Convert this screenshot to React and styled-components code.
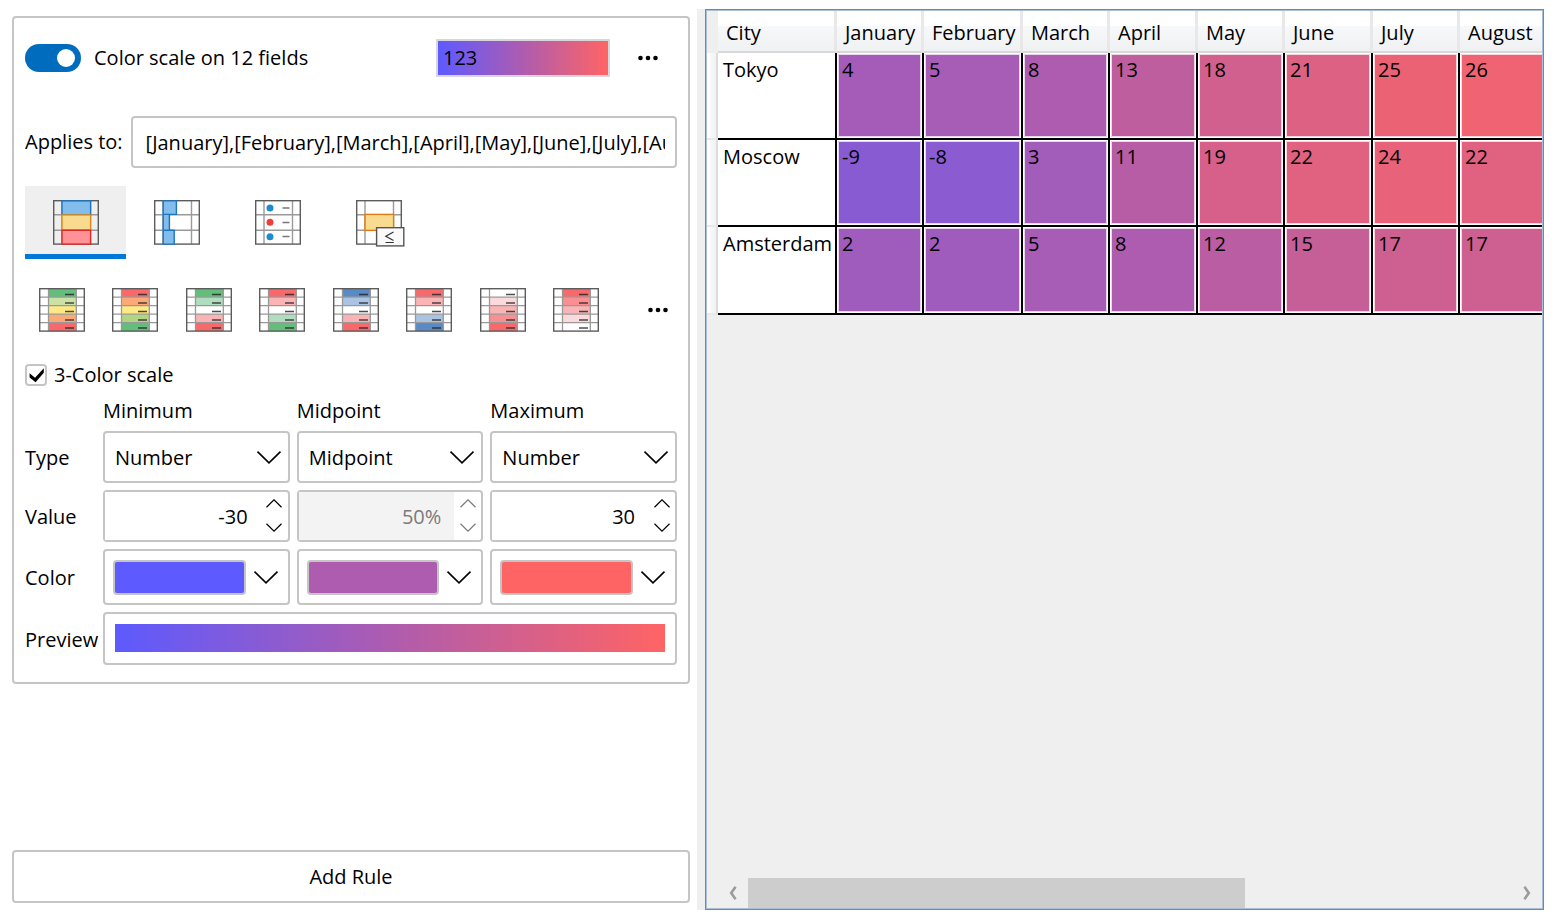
import React, { useState } from 'react'
import styled, { createGlobalStyle, css } from 'styled-components'

const MIN = [93, 90, 255]
const MID = [174, 92, 175]
const MAX = [255, 100, 100]

const rgb = c => `rgb(${c.join(', ')})`
const mix = (a, b, t) => a.map((v, i) => Math.round(v + (b[i] - v) * t))

const LOW = -30
const CENTER = 8.5
const HIGH = 30

const scaleColor = value =>
  rgb(
    value < CENTER
      ? mix(MIN, MID, (value - LOW) / (CENTER - LOW))
      : mix(MID, MAX, (value - CENTER) / (HIGH - CENTER))
  )

const gradient = `linear-gradient(to right, ${rgb(MIN)}, ${rgb(MID)}, ${rgb(MAX)})`

const GlobalStyle = createGlobalStyle`
  * {
    box-sizing: border-box;
  }
  body {
    margin: 0;
    background: #fff;
    color: #000;
    font-family: "Open Sans", "Noto Sans", sans-serif;
    font-size: 20px;
    line-height: 26px;
  }
  button, input, select {
    margin: 0;
    font: inherit;
    color: inherit;
  }
`

const Page = styled.div`
  display: grid;
  grid-template-columns: minmax(0, 685fr) 8px minmax(0, 839fr);
  min-height: 100vh;
  padding: 9px 12px 8px;
`

const RulesPane = styled.section`
  display: flex;
  flex-direction: column;
  justify-content: space-between;
  padding: 7px 0;
  margin-right: 7px;
`

const Splitter = styled.div`
  background: #efefef;
`

const boxed = css`
  background: #fff;
  border: 2px solid #c5c5c5;
  border-radius: 4px;
`

const Card = styled.div`
  ${boxed}
  padding: 21px 11px 17px;
`

const CardHeader = styled.div`
  display: flex;
  align-items: center;
  height: 38px;
`

const Switch = styled.input`
  appearance: none;
  display: flex;
  align-items: center;
  justify-content: flex-end;
  width: 56px;
  height: 28px;
  padding: 0 6px;
  border-radius: 14px;
  background: #006cbe;

  &::before {
    content: '';
    width: 18px;
    height: 18px;
    border-radius: 50%;
    background: #fff;
  }

  &:not(:checked) {
    justify-content: flex-start;
    background: #8a8a8a;
  }
`

const SwitchLabel = styled.label`
  margin-left: 13px;
`

const Sample = styled.div`
  width: 174px;
  height: 38px;
  margin-left: auto;
  padding: 4px 5px;
  border: 2px solid #d9d5dd;
  background: ${gradient} padding-box;
`

const PlainButton = styled.button`
  display: flex;
  align-items: center;
  justify-content: center;
  padding: 0;
  border: 0;
  background: none;
`

const MoreButton = styled(PlainButton)`
  width: 36px;
  height: 36px;
  margin-left: ${props => (props.$push ? 'auto' : '20px')};
  margin-right: ${props => (props.$push ? '1px' : '11px')};
`

const AppliesRow = styled.div`
  display: flex;
  align-items: center;
  gap: 8px;
  margin-top: 39px;
`

const AppliesInput = styled.input`
  ${boxed}
  flex: 1;
  min-width: 0;
  height: 52px;
  padding: 0 10px 0 13px;
`

const TabList = styled.div`
  display: flex;
  margin-top: 18px;
`

const Tab = styled(PlainButton)`
  align-items: flex-start;
  width: 101px;
  height: 73px;
  padding-top: 14px;
  border-bottom: 5px solid ${props => (props.$active ? '#0078d7' : 'transparent')};
  background: ${props => (props.$active ? '#efefef' : 'none')};
`

const PresetList = styled.div`
  display: grid;
  grid-template-columns: repeat(8, 1fr) 64px;
  align-items: center;
  height: 44px;
  margin-top: 29px;
`

const CheckRow = styled.div`
  display: flex;
  align-items: center;
  gap: 7px;
  height: 22px;
  margin-top: 32px;
`

const CheckWrap = styled.span`
  position: relative;
  display: flex;

  svg {
    position: absolute;
    inset: 0;
    pointer-events: none;
  }
`

const CheckBox = styled.input`
  ${boxed}
  appearance: none;
  width: 22px;
  height: 22px;
`

const Form = styled.div`
  display: grid;
  grid-template-columns: 71px repeat(3, minmax(0, 1fr));
  gap: 7px;
  align-items: center;
  margin-top: 12px;
`

const ColumnLabel = styled.span`
  white-space: nowrap;
`

const RowLabel = styled(ColumnLabel)`
  padding-top: 2px;
`

const SelectBox = styled.div`
  display: grid;
  align-items: center;

  > * {
    grid-area: 1 / 1;
  }

  svg {
    justify-self: end;
    margin-right: 8px;
    pointer-events: none;
  }
`

const Select = styled.select`
  ${boxed}
  appearance: none;
  width: 100%;
  height: 52px;
  padding: 2px 40px 0 10px;
`

const NumberBox = styled.div`
  ${boxed}
  display: flex;
  height: 52px;
  color: ${props => (props.$disabled ? '#7a7a7a' : '#000')};
`

const NumberInput = styled.input`
  flex: 1;
  min-width: 0;
  padding: 2px 13px 0;
  border: 0;
  background: #fff;
  text-align: right;

  &:disabled {
    background: #f3f3f3;
  }
`

const Spinner = styled.div`
  display: flex;
  flex-direction: column;
  width: 27px;
`

const SpinButton = styled(PlainButton)`
  flex: 1;
`

const ColorButton = styled.button`
  ${boxed}
  display: flex;
  align-items: center;
  justify-content: space-between;
  height: 56px;
  padding: 0 9px 0 8px;
`

const ColorFill = styled.span`
  flex: 1;
  height: 35px;
  margin-right: 7px;
  border: 2px solid #c5c5c5;
  border-radius: 4px;
  background: ${props => props.$color};
`

const Preview = styled.div`
  ${boxed}
  grid-column: 2 / -1;
  height: 53px;
  padding: 10px;
`

const PreviewBar = styled.div`
  height: 28px;
  background: ${gradient};
`

const AddButton = styled.button`
  ${boxed}
  height: 53px;
  padding-top: 2px;
`

const GridPane = styled.section`
  display: flex;
  flex-direction: column;
  justify-content: space-between;
  overflow: hidden;
  border: 1px solid #6a8bad;
  box-shadow: inset 0 0 0 1px #a9bfd6;
  padding: 1px;
  background: #efefef;
`

const TableView = styled.div`
  overflow: hidden;
`

const Table = styled.table`
  table-layout: fixed;
  width: 840px;
  border-collapse: separate;
  border-spacing: 0;
`

const Col = styled.col`
  width: ${props => props.$width}px;
`

const HeadCell = styled.th`
  height: 42px;
  padding: 4px 0 0 8px;
  border-right: 3px solid #e8e8e8;
  border-bottom: 2px solid #d8d8d8;
  background: linear-gradient(#fff 38%, #f7f8fa 38%, #f0f1f3);
  font-weight: normal;
  text-align: left;
`

const Corner = styled.td`
  padding: 0;
  background: #efefef;
`

const RowHead = styled.td`
  padding: 0;
  border-right: 2px solid #dcdcdc;
  border-bottom: 2px solid #e8e8e8;
  background: linear-gradient(to right, #fff 35%, #f7f8fa 35%, #f1f2f4);
`

const Cell = styled.td`
  height: ${props => (props.$last ? 88 : 87)}px;
  padding: ${props => (props.$city ? '4px 5px' : '1px')};
  border-right: 2px solid #000;
  border-bottom: 2px solid #000;
  background: #fff;
  vertical-align: top;
`

const Heat = styled.div`
  height: ${props => (props.$last ? 84 : 83)}px;
  padding: 2px 3px;
  border: 1px solid rgba(255, 255, 255, 0.75);
  background: ${props => props.$color};
`

const ScrollBar = styled.div`
  display: flex;
  height: 30px;
  margin-left: 11px;
`

const ScrollTrack = styled.div`
  flex: 1;
`

const ScrollThumb = styled.div`
  width: 65%;
  height: 100%;
  background: #cdcdcd;
`

const ScrollButton = styled(PlainButton)`
  width: 30px;
`

const Dots = () => (
  <svg width="20" height="6" viewBox="0 0 20 6" aria-hidden="true">
    <circle cx="2.5" cy="3" r="2.3" />
    <circle cx="10" cy="3" r="2.3" />
    <circle cx="17.5" cy="3" r="2.3" />
  </svg>
)

const Chevron = () => (
  <svg width="26" height="14" viewBox="0 0 26 14" fill="none" stroke="#000" strokeWidth="1.6" aria-hidden="true">
    <path d="M1.5 1.6 L13 12.8 L24.5 1.6" />
  </svg>
)

const SmallChevron = ({ up }) => (
  <svg width="16" height="10" viewBox="0 0 16 10" fill="none" stroke="currentColor" strokeWidth="1.2" aria-hidden="true">
    <path d={up ? 'M0.5 8.2 L8 0.8 L15.5 8.2' : 'M0.5 0.8 L8 8.2 L15.5 0.8'} />
  </svg>
)

const Check = () => (
  <svg width="22" height="22" viewBox="0 0 22 22" aria-hidden="true">
    <path d="M4.6 9.2 L10 13.8 L18.8 4.2 V8.8 L10.6 18.2 L4.6 13.4 Z" />
  </svg>
)

const ScrollArrow = ({ right }) => (
  <svg width="8" height="14" viewBox="0 0 8 14" fill="none" stroke="#9b9b9b" strokeWidth="2.6" aria-hidden="true">
    <path d={right ? 'M1.4 0.8 L5.8 7 L1.4 13.2' : 'M6.6 0.8 L2.2 7 L6.6 13.2'} />
  </svg>
)

const IconFrame = ({ sides = true, children }) => (
  <svg width="46" height="45" viewBox="0 0 46 45" fill="none" overflow="visible" aria-hidden="true">
    <rect x="0.7" y="0.7" width="44.6" height="43.4" fill={sides ? '#fff' : 'none'} />
    <path d="M0.7 14.7 H45.3 M0.7 30.3 H45.3 M9 0.7 V44 M37.5 0.7 V44" stroke="#9a9a9a" strokeWidth="1.4" />
    <rect x="0.7" y="0.7" width="44.6" height="43.4" stroke="#5c5c5c" strokeWidth="1.4" />
    {children}
  </svg>
)

const ScaleIcon = () => (
  <IconFrame sides={false}>
    <rect x="9" y="0.9" width="28.6" height="13.8" fill="#83bdec" stroke="#1a76c2" strokeWidth="1.4" />
    <rect x="9" y="14.9" width="28.6" height="15" fill="#f8db8f" stroke="#dd8a1e" strokeWidth="1.4" />
    <rect x="9" y="30.3" width="28.6" height="13.8" fill="#ff9197" stroke="#d92b2b" strokeWidth="1.4" />
  </IconFrame>
)

const BarsIcon = () => (
  <IconFrame>
    <path
      d="M9.2 0.9 H22.4 V14.4 H15.4 V30.3 H20.2 V44.1 H9.2 Z M9.2 14.4 H15.4 M9.2 30.3 H15.4"
      fill="#83bdec"
      stroke="#1a76c2"
      strokeWidth="1.4"
    />
  </IconFrame>
)

const SymbolsIcon = () => (
  <IconFrame>
    <circle cx="15" cy="8" r="3.5" fill="#1e8bd1" />
    <circle cx="15" cy="22.3" r="3.5" fill="#ee3e38" />
    <circle cx="15" cy="36.7" r="3.5" fill="#1e8bd1" />
    <path d="M27.5 8 H34.5 M27.5 22.5 H34.5 M27.5 36.5 H34.5" stroke="#777" strokeWidth="1.3" />
  </IconFrame>
)

const ConditionIcon = () => (
  <IconFrame>
    <rect x="9" y="14.4" width="28.6" height="16" fill="#f8db8f" stroke="#dd7a14" strokeWidth="1.4" />
    <rect x="20.6" y="27.7" width="27.2" height="18.2" fill="#fafafa" stroke="#555" strokeWidth="1.4" />
    <path d="M37.5 32 L29.8 36.3 L37.5 40.6 M29.5 42.5 H37.8" stroke="#333" strokeWidth="1.2" />
  </IconFrame>
)

const PresetIcon = ({ colors }) => (
  <svg width="46" height="44" viewBox="0 0 46 44" fill="none" aria-hidden="true">
    {colors.map((color, i) => (
      <rect key={i} x="9.5" y={0.7 + i * 8.5} width="28" height="8.5" fill={color} />
    ))}
    <path
      d="M0.7 9.2 H45.3 M0.7 17.7 H45.3 M0.7 26.2 H45.3 M0.7 34.7 H45.3 M9.5 0.7 V43 M37.3 0.7 V43"
      stroke="#999"
      strokeWidth="1.3"
    />
    <path d="M26 6.5 H35 M26 15 H35 M26 23.5 H35 M26 32 H35 M26 40 H35" stroke="#222" strokeOpacity="0.8" strokeWidth="1.3" />
    <rect x="0.7" y="0.7" width="44.6" height="42.4" stroke="#5c5c5c" strokeWidth="1.4" />
  </svg>
)

const tabs = [
  { name: 'Color scale', Icon: ScaleIcon },
  { name: 'Data bars', Icon: BarsIcon },
  { name: 'Icon set', Icon: SymbolsIcon },
  { name: 'Condition', Icon: ConditionIcon }
]

const presets = [
  ['#63be7b', '#cbe1a6', '#ffe984', '#fbaa77', '#f8696b'],
  ['#f8696b', '#fbaa77', '#ffe984', '#b1d580', '#63be7b'],
  ['#63be7b', '#b0ddbd', '#ffffff', '#fbb4b6', '#f8696b'],
  ['#f8696b', '#fbb4b6', '#ffffff', '#b0ddbd', '#63be7b'],
  ['#5a8ac6', '#abc3e2', '#ffffff', '#fbb4b6', '#f8696b'],
  ['#f8696b', '#fbb4b6', '#ffffff', '#abc3e2', '#5a8ac6'],
  ['#ffffff', '#fcdadb', '#fbb4b6', '#f98f91', '#f8696b'],
  ['#f8696b', '#f98f91', '#fbb4b6', '#fcdadb', '#ffffff']
]

const points = [
  { name: 'Minimum', type: 'Number', value: '-30', color: rgb(MIN) },
  { name: 'Midpoint', type: 'Midpoint', value: '50%', color: rgb(MID), disabled: true },
  { name: 'Maximum', type: 'Number', value: '30', color: rgb(MAX) }
]

const columns = [
  ['January', 87],
  ['February', 99],
  ['March', 87],
  ['April', 88],
  ['May', 87],
  ['June', 88],
  ['July', 87],
  ['August', 87]
]

const rows = [
  ['Tokyo', [4, 5, 8, 13, 18, 21, 25, 26]],
  ['Moscow', [-9, -8, 3, 11, 19, 22, 24, 22]],
  ['Amsterdam', [2, 2, 5, 8, 12, 15, 17, 17]]
]

const ColorForm = () => (
  <Form>
    <span />
    {points.map(p => (
      <ColumnLabel key={p.name}>{p.name}</ColumnLabel>
    ))}
    <RowLabel>Type</RowLabel>
    {points.map(p => (
      <SelectBox key={p.name}>
        <Select aria-label={`${p.name} type`} defaultValue={p.type}>
          <option>{p.type}</option>
        </Select>
        <Chevron />
      </SelectBox>
    ))}
    <RowLabel>Value</RowLabel>
    {points.map(p => (
      <NumberBox key={p.name} $disabled={p.disabled}>
        <NumberInput aria-label={`${p.name} value`} defaultValue={p.value} disabled={p.disabled} />
        <Spinner>
          <SpinButton aria-label={`Increase ${p.name}`} disabled={p.disabled}>
            <SmallChevron up />
          </SpinButton>
          <SpinButton aria-label={`Decrease ${p.name}`} disabled={p.disabled}>
            <SmallChevron />
          </SpinButton>
        </Spinner>
      </NumberBox>
    ))}
    <RowLabel>Color</RowLabel>
    {points.map(p => (
      <ColorButton key={p.name} aria-label={`${p.name} color`}>
        <ColorFill $color={p.color} />
        <Chevron />
      </ColorButton>
    ))}
    <RowLabel>Preview</RowLabel>
    <Preview>
      <PreviewBar />
    </Preview>
  </Form>
)

const RuleCard = () => {
  const [tab, setTab] = useState(0)
  const [threeColor, setThreeColor] = useState(true)

  return (
    <Card>
      <CardHeader>
        <Switch type="checkbox" role="switch" id="rule-on" defaultChecked />
        <SwitchLabel htmlFor="rule-on">Color scale on 12 fields</SwitchLabel>
        <Sample>123</Sample>
        <MoreButton aria-label="Rule options">
          <Dots />
        </MoreButton>
      </CardHeader>
      <AppliesRow>
        <label htmlFor="applies">Applies to:</label>
        <AppliesInput
          id="applies"
          defaultValue="[January],[February],[March],[April],[May],[June],[July],[August],[September],[October],[November],[December]"
        />
      </AppliesRow>
      <TabList role="tablist">
        {tabs.map(({ name, Icon }, i) => (
          <Tab
            key={name}
            role="tab"
            aria-label={name}
            aria-selected={tab === i}
            $active={tab === i}
            onClick={() => setTab(i)}
          >
            <Icon />
          </Tab>
        ))}
      </TabList>
      <PresetList>
        {presets.map((colors, i) => (
          <PlainButton key={i} aria-label={`Preset ${i + 1}`}>
            <PresetIcon colors={colors} />
          </PlainButton>
        ))}
        <MoreButton $push aria-label="More presets">
          <Dots />
        </MoreButton>
      </PresetList>
      <CheckRow>
        <CheckWrap>
          <CheckBox
            type="checkbox"
            id="three-color"
            checked={threeColor}
            onChange={e => setThreeColor(e.target.checked)}
          />
          {threeColor && <Check />}
        </CheckWrap>
        <label htmlFor="three-color">3-Color scale</label>
      </CheckRow>
      <ColorForm />
    </Card>
  )
}

const DataTable = () => (
  <Table>
    <colgroup>
      <Col $width={11} />
      <Col $width={119} />
      {columns.map(([name, width]) => (
        <Col key={name} $width={width} />
      ))}
    </colgroup>
    <thead>
      <tr>
        <Corner />
        <HeadCell scope="col">City</HeadCell>
        {columns.map(([name]) => (
          <HeadCell key={name} scope="col">
            {name}
          </HeadCell>
        ))}
      </tr>
    </thead>
    <tbody>
      {rows.map(([city, temps], r) => (
        <tr key={city}>
          <RowHead />
          <Cell $city $last={r === 2}>
            {city}
          </Cell>
          {temps.map((t, i) => (
            <Cell key={i} $last={r === 2}>
              <Heat $color={scaleColor(t)} $last={r === 2}>
                {t}
              </Heat>
            </Cell>
          ))}
        </tr>
      ))}
    </tbody>
  </Table>
)

export default function App() {
  return (
    <>
      <GlobalStyle />
      <Page>
        <RulesPane>
          <RuleCard />
          <AddButton>Add Rule</AddButton>
        </RulesPane>
        <Splitter />
        <GridPane>
          <TableView>
            <DataTable />
          </TableView>
          <ScrollBar>
            <ScrollButton aria-label="Scroll left">
              <ScrollArrow />
            </ScrollButton>
            <ScrollTrack>
              <ScrollThumb />
            </ScrollTrack>
            <ScrollButton aria-label="Scroll right">
              <ScrollArrow right />
            </ScrollButton>
          </ScrollBar>
        </GridPane>
      </Page>
    </>
  )
}
